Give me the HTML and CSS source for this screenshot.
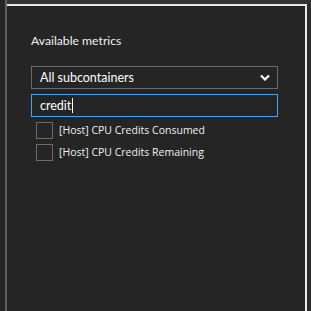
FILE: index.html
```html
<!DOCTYPE html>
<html lang="en">
<head>
  <meta charset="UTF-8" />
  <title>Available metrics</title>
  <link rel="stylesheet" href="styles.css">
</head>
<body>
  <div class="topbar"></div>
  <div class="frame">
    <div class="gutter"></div>
    <div class="panel">
      <h3>Available metrics</h3>

      <div class="select">
        <span>All subcontainers</span>
        <svg class="chevron" width="10" height="7" viewBox="0 0 10 7">
          <path d="M1 1.5 L5 5.5 L9 1.5" fill="none" stroke="#fff" stroke-width="2.2"/>
        </svg>
      </div>

      <div class="search">credit<span class="caret"></span></div>

      <ul class="metrics">
        <li><span class="box"></span>[Host] CPU Credits Consumed</li>
        <li><span class="box"></span>[Host] CPU Credits Remaining</li>
      </ul>
    </div>
    <div class="side"></div>
  </div>
</body>
</html>
```

FILE: styles.css
```css
* { box-sizing: border-box; }

html, body {
  height: 100%;
}

body {
  margin: 0;
  background: #262626;
  font-family: 'Lato', 'Open Sans', sans-serif;
  color: #fff;
  display: flex;
  flex-direction: column;
}

.topbar {
  height: 4px;
  background: #333;
  margin-left: 5px;
  border-left: 2px solid #5f5f5f;
}

.frame {
  flex: 1;
  display: flex;
}

.gutter {
  width: 7px;
  border-right: 2px solid #5f5f5f;
}

.panel {
  width: 298px;
  background: #252525;
  border-top: 2px solid #e8e8e8;
  padding: 0 27px 0 24px;
}

.panel h3 {
  margin: 26px 0 16px;
  font-size: 12.2px;
  font-weight: normal;
  color: #f0f0f0;
  line-height: 18px;
}

.select {
  height: 23px;
  border: 1px solid #6b6b6b;
  display: flex;
  align-items: center;
  justify-content: space-between;
  padding: 0 7px 0 8px;
  font-size: 12.5px;
}

.chevron {
  display: block;
}

.search {
  margin-top: 5px;
  height: 23px;
  border: 1px solid #4da3e8;
  display: flex;
  align-items: center;
  padding: 0 8px;
  font-size: 12.5px;
}

.caret {
  width: 1px;
  height: 15px;
  background: #fff;
  margin-left: 1px;
}

.metrics {
  list-style: none;
  margin: 2px 0 0;
  padding: 0 0 0 5px;
}

.metrics li {
  display: flex;
  align-items: center;
  height: 22px;
  font-family: 'Open Sans', sans-serif;
  font-size: 10.5px;
  color: #f0f0f0;
}

.box {
  width: 17px;
  height: 17px;
  border: 1px solid #6b6b6b;
  margin-right: 6px;
}

.side {
  flex: 1;
  background: #2a2a2a;
  border-left: 2px solid #e8e8e8;
}
```
